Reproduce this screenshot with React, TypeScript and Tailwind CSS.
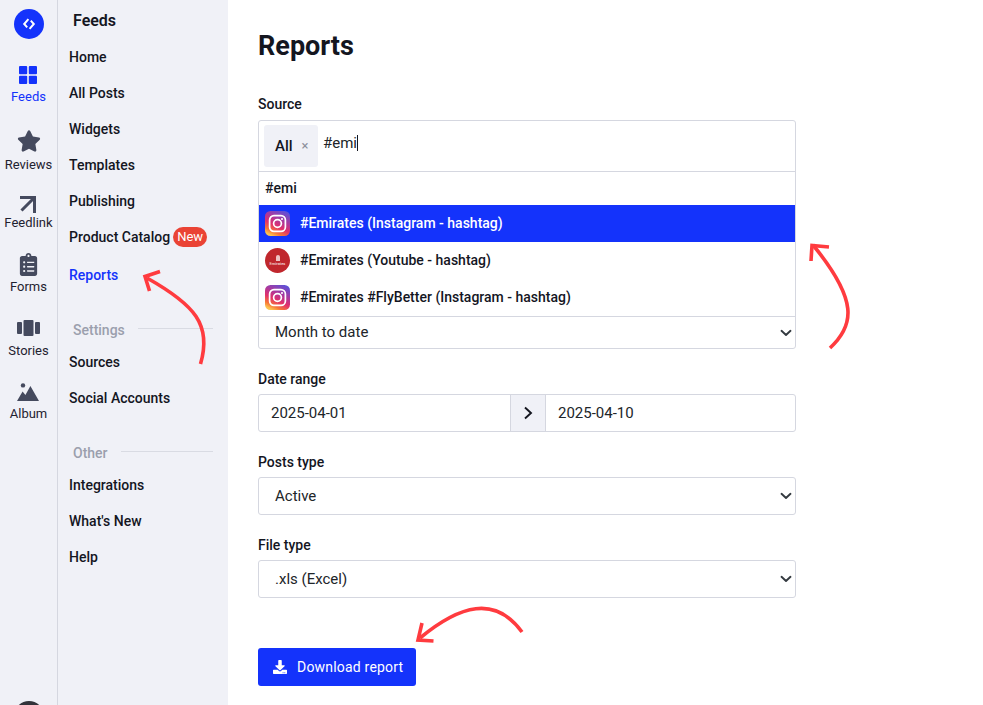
import React from "react";
import { FaStar, FaClipboardList, FaDownload } from "react-icons/fa";

const BLUE = "#1433fb";

function RailItem({ label, active, icon, top, gap }: { label: string; active?: boolean; icon: React.ReactNode; top: string; gap: string }) {
  return (
    <div className={`flex flex-col items-center ${top}`}>
      {icon}
      <div className={`${gap} h-4 text-[13px] leading-4 whitespace-nowrap ${active ? "text-[#1433fb]" : "text-[#1f2230]"}`}>{label}</div>
    </div>
  );
}

function NavLink({ children, active }: { children: React.ReactNode; active?: boolean }) {
  return (
    <div className={`flex h-9 items-center pl-[11px] text-[14px] font-medium whitespace-nowrap ${active ? "text-[#1433fb]" : "text-[#14161f]"}`}>
      {children}
    </div>
  );
}

function SectionTitle({ children, className }: { children: React.ReactNode; className: string }) {
  return (
    <div className={`flex items-center gap-[13px] pl-[15px] pr-[15px] text-[14px] font-medium leading-5 text-[#9b9fad] ${className}`}>
      <span>{children}</span>
      <span className="relative -top-[2px] h-px flex-1 bg-[#d9dbe3]" />
    </div>
  );
}

function Chevron() {
  return (
    <svg width="12" height="8" viewBox="0 0 12 8" fill="none" stroke="#343a40" strokeWidth="1.9" strokeLinecap="round" strokeLinejoin="round">
      <path d="M1.5 1.8 6 6l4.5-4.2" />
    </svg>
  );
}

function SelectBox({ value, className }: { value: string; className?: string }) {
  return (
    <div className={`flex h-[38px] items-center justify-between rounded-[3px] border border-[#d5d7e0] bg-white pl-4 pr-[3px] text-[15px] text-[#212529] ${className ?? ""}`}>
      <span>{value}</span>
      <span className="mr-[0px] flex w-3 justify-center"><Chevron /></span>
    </div>
  );
}

function Insta({ id }: { id: string }) {
  return (
    <svg width="25" height="25" viewBox="0 0 25 25" className="shrink-0">
      <defs>
        <linearGradient id={id} x1="0.8" y1="0" x2="0.3" y2="1">
          <stop offset="0" stopColor="#5b51d8" />
          <stop offset="0.35" stopColor="#a83aa0" />
          <stop offset="0.62" stopColor="#e1306c" />
          <stop offset="0.85" stopColor="#f77737" />
          <stop offset="1" stopColor="#fcc34f" />
        </linearGradient>
      </defs>
      <rect width="25" height="25" rx="5.5" fill={`url(#${id})`} />
      <rect x="4.6" y="4.6" width="15.8" height="15.8" rx="4.4" fill="none" stroke="#fff" strokeWidth="1.7" />
      <circle cx="12.5" cy="12.5" r="3.9" fill="none" stroke="#fff" strokeWidth="1.7" />
      <circle cx="17" cy="8" r="1.05" fill="#fff" />
    </svg>
  );
}

function Option({ children, icon, active }: { children: React.ReactNode; icon: React.ReactNode; active?: boolean }) {
  return (
    <div className={`flex h-[37px] items-center gap-[10px] pl-[6px] text-[14px] font-medium ${active ? "bg-[#1433fb] text-white" : "text-[#14161f]"}`}>
      {icon}
      <span>{children}</span>
    </div>
  );
}

function Label({ children, className }: { children: React.ReactNode; className?: string }) {
  return <div className={`h-5 text-[14px] font-medium leading-5 text-[#14161f] ${className ?? ""}`}>{children}</div>;
}

export default function App() {
  return (
    <div className="relative flex h-[705px] w-[983px] overflow-hidden bg-white font-['Roboto',sans-serif]">
      {/* icon rail */}
      <aside className="flex w-[58px] shrink-0 flex-col items-center overflow-hidden border-r border-[#d5d7e0] bg-[#f0f1f7] pt-[9px]">
        <div className="flex h-[30px] w-[30px] shrink-0 items-center justify-center rounded-full bg-[#1433fb]">
          <svg width="14" height="14" viewBox="0 0 14 14" fill="none" stroke="#fff" strokeWidth="2">
            <path d="M6.4 2.2 2.2 7l3 3.4" />
            <path d="M7.6 11.8 11.8 7l-3-3.4" />
          </svg>
        </div>
        <RailItem label="Feeds" active top="mt-[27px]" gap="mt-[5px]" icon={
          <svg width="18" height="18" viewBox="0 0 18 18" fill={BLUE}>
            <rect width="8.2" height="8.2" rx="1" /><rect x="9.8" width="8.2" height="8.2" rx="1" />
            <rect y="9.8" width="8.2" height="8.2" rx="1" /><rect x="9.8" y="9.8" width="8.2" height="8.2" rx="1" />
          </svg>} />
        <RailItem label="Reviews" top="mt-6" gap="mt-1" icon={<FaStar size={24} color="#454a5e" />} />
        <RailItem label="Feedlink" top="mt-[22px]" gap="mt-[2px]" icon={
          <svg width="18" height="18" viewBox="0 0 18 18" fill="none" stroke="#454a5e" strokeWidth="3">
            <path d="M1 2.5h14.5V18" /><path d="M15 3 2.5 15.5" />
          </svg>} />
        <RailItem label="Forms" top="mt-[22px]" gap="mt-[3px]" icon={<FaClipboardList size={23} color="#454a5e" />} />
        <RailItem label="Stories" top="mt-[25px]" gap="mt-[7px]" icon={
          <svg width="23" height="16" viewBox="0 0 23 16" fill="#454a5e">
            <rect y="2" width="5" height="12" rx="1" /><rect x="6.5" width="10" height="16" rx="1" /><rect x="18" y="2" width="5" height="12" rx="1" />
          </svg>} />
        <RailItem label="Album" top="mt-6" gap="mt-[5px]" icon={
          <svg width="22" height="18" viewBox="0 0 22 18" fill="#454a5e">
            <circle cx="6" cy="2.4" r="2.2" />
            <path d="M0 18 5.6 8.4 8.4 12 13.4 3 22 18Z" />
          </svg>} />
        <div className="mt-[279px] h-[30px] w-[30px] shrink-0 rounded-full bg-[#33333a]" />
      </aside>

      {/* secondary nav */}
      <nav className="w-[170px] shrink-0 bg-[#f0f1f7] pt-[11px]">
        <div className="mb-[8px] h-5 pl-[15px] text-[16px] font-semibold leading-5 text-[#14161f]">Feeds</div>
        <NavLink>Home</NavLink>
        <NavLink>All Posts</NavLink>
        <NavLink>Widgets</NavLink>
        <NavLink>Templates</NavLink>
        <NavLink>Publishing</NavLink>
        <NavLink>
          Product Catalog
          <span className="ml-[3px] flex h-[20px] w-[34px] items-center justify-center rounded-full bg-[#ea4335] text-[13px] font-normal text-white">New</span>
        </NavLink>
        <div className="mt-[2px]"><NavLink active>Reports</NavLink></div>
        <SectionTitle className="mt-[27px] mb-[4px]">Settings</SectionTitle>
        <NavLink>Sources</NavLink>
        <NavLink>Social Accounts</NavLink>
        <SectionTitle className="mt-[27px] mb-[4px]">Other</SectionTitle>
        <NavLink>Integrations</NavLink>
        <NavLink>What's New</NavLink>
        <NavLink>Help</NavLink>
      </nav>

      {/* main */}
      <main className="flex-1 pl-[30px] pt-[28px]">
        <div className="w-[538px]">
          <h1 className="h-9 text-[27px] font-bold leading-9 text-[#14161f]">Reports</h1>
          <Label className="mt-[30px]">Source</Label>
          <div className="mt-[6px] overflow-hidden rounded-[3px] border border-[#d5d7e0] bg-white">
            <div className="flex h-[51px] items-start border-b border-[#d5d7e0] pl-[5px] pt-1">
              <div className="flex h-[42px] w-[54px] items-center rounded-[3px] bg-[#f0f1f7] pl-[11px] text-[15px] font-medium text-[#14161f]">
                All<span className="ml-[9px] text-[13px] font-normal text-[#8b8f9c]">×</span>
              </div>
              <div className="ml-[5px] flex h-[36px] items-center text-[15px] text-[#212529]">
                #emi<span className="h-[16px] w-px bg-[#14161f]" />
              </div>
            </div>
            <div className="flex h-[33px] items-center pl-[6px] text-[14px] font-medium text-[#14161f]">#emi</div>
            <Option active icon={<Insta id="ig1" />}>#Emirates (Instagram - hashtag)</Option>
            <Option icon={
              <span className="flex h-[25px] w-[25px] shrink-0 flex-col items-center justify-center rounded-full bg-[#c0272d] text-[4px] leading-[5px] text-[#f5dcdc]">
                <span className="h-[6px] w-[4px] rounded-t-full bg-[#eec4c4]" />
                Emirates
              </span>}>#Emirates (Youtube - hashtag)</Option>
            <Option icon={<Insta id="ig2" />}>#Emirates #FlyBetter (Instagram - hashtag)</Option>
            <div className="flex h-[32px] items-center justify-between border-t border-[#d5d7e0] pl-4 pr-[3px] text-[15px] text-[#212529]">
              <span>Month to date</span>
              <span className="flex w-3 justify-center"><Chevron /></span>
            </div>
          </div>

          <Label className="mt-[20px]">Date range</Label>
          <div className="mt-[5px] flex h-[38px] rounded-[3px] border border-[#d5d7e0] bg-white text-[15px] text-[#212529]">
            <div className="flex w-[251px] items-center pl-3">2025-04-01</div>
            <div className="flex w-[36px] items-center justify-center border-x border-[#d5d7e0] bg-[#f0f1f7]">
              <svg width="10" height="14" viewBox="0 0 10 14" fill="none" stroke="#14161f" strokeWidth="1.9"><path d="M2 1.5 8 7l-6 5.5" /></svg>
            </div>
            <div className="flex flex-1 items-center pl-3">2025-04-10</div>
          </div>

          <Label className="mt-[20px]">Posts type</Label>
          <SelectBox value="Active" className="mt-[5px]" />
          <Label className="mt-[20px]">File type</Label>
          <SelectBox value=".xls (Excel)" className="mt-[5px]" />

          <button className="mt-[50px] flex h-[38px] w-[158px] items-center rounded-[3px] bg-[#1433fb] pl-[15px] text-[14px] text-white">
            <FaDownload size={14} />
            <span className="ml-[10px] tracking-[0.2px]">Download report</span>
          </button>
        </div>
      </main>

      {/* hand-drawn annotation arrows */}
      <svg className="pointer-events-none absolute left-0 top-0" width="983" height="705" fill="none" stroke="#ff3b3f" strokeWidth="3.6">
        <path d="M200.5 364C212 325 195 305 147 278" />
        <path d="M160 271.5 145 276.5 149.500 291" />
        <path d="M830 348C855 325 858 300 813 245" />
        <path d="M829 247 812 245.500 811 261" />
        <path d="M522 632C495 595 460 605 420 638" />
        <path d="M422 623 418 640 433.500 641" />
      </svg>
    </div>
  );
}
